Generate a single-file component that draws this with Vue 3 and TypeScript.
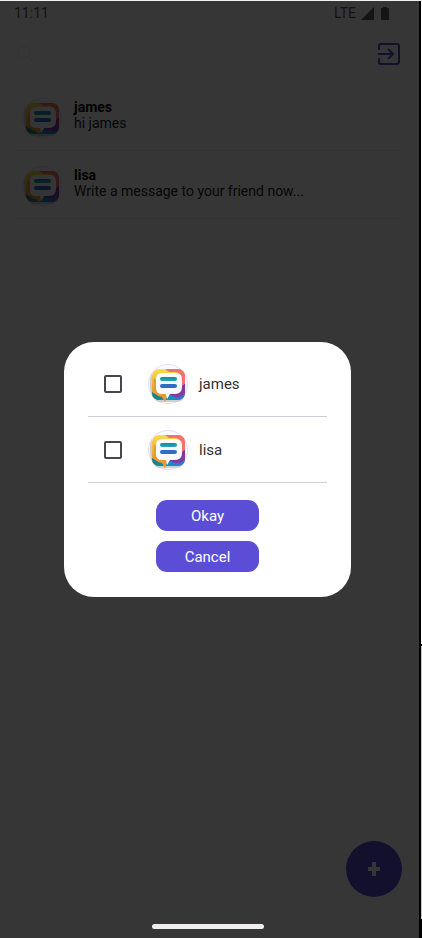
<script setup lang="ts">
import { ref } from 'vue'

interface Chat {
  name: string
  message: string
}

const chats: Chat[] = [
  { name: 'james', message: 'hi james' },
  { name: 'lisa', message: 'Write a message to your friend now...' },
]

const selected = ref<string[]>([])
</script>

<template>
  <div class="page">
    <svg class="sprite" width="0" height="0" aria-hidden="true">
      <defs>
        <linearGradient id="gold" x1="0" y1="0" x2="0" y2="1">
          <stop offset="0" stop-color="#fbdc4c" />
          <stop offset="0.5" stop-color="#eeb038" />
          <stop offset="1" stop-color="#e58a2c" />
        </linearGradient>
        <linearGradient id="violet" x1="0" y1="0" x2="1" y2="1">
          <stop offset="0" stop-color="#6b2a92" />
          <stop offset="1" stop-color="#8d3fa6" />
        </linearGradient>
        <linearGradient id="sea" x1="0" y1="0" x2="1" y2="0">
          <stop offset="0" stop-color="#12807f" />
          <stop offset="0.45" stop-color="#1793b8" />
          <stop offset="1" stop-color="#2b6fe0" />
        </linearGradient>
        <linearGradient id="teal" x1="0" y1="0" x2="0" y2="1">
          <stop offset="0" stop-color="#168a94" />
          <stop offset="1" stop-color="#22a9bd" />
        </linearGradient>
        <clipPath id="tile">
          <rect x="4" y="5" width="33" height="31" rx="7" />
        </clipPath>
      </defs>
      <symbol id="logo" viewBox="0 0 40 40">
        <circle cx="20" cy="20" r="19.5" fill="#fbfaff" stroke="#e6dcfa" />
        <path d="M4 9Q1 14 2 24Q3 35 10 38H30Q35 37 36 33L6 30Z" fill="#d0cfcf" />
        <g clip-path="url(#tile)">
          <rect x="4" y="5" width="33" height="31" fill="url(#gold)" />
          <path d="M17 5H38V25H33V14Q33 8 27 8H21Z" fill="#f0736d" />
          <path d="M4 28Q9 32 16 32L24 30L38 24V36H4Z" fill="url(#sea)" />
          <path d="M38 19V28Q33 35 25 32L20 30H28Q32 29 34 22Z" fill="url(#violet)" />
        </g>
        <path d="M6 14V26Q7 32 14 33L17 38L20 30Z" fill="#e69b30" />
        <path d="M14 9H27Q34 9 34 15V23Q34 30 27 30H22L19 35L18 30H14Q8 30 8 24V15Q8 9 14 9Z" fill="#fafafa" />
        <rect x="12" y="13" width="17" height="4" rx="2" fill="url(#teal)" />
        <rect x="12" y="20" width="17" height="4" rx="2" fill="#2c6fc4" />
      </symbol>
    </svg>

    <main class="screen">
      <header class="status">
        <span>11:11</span>
        <span class="signals">
          LTE
          <svg width="13" height="13" viewBox="0 0 13 13"><path d="M13 0V13H0Z" fill="currentColor" /></svg>
          <svg class="battery" width="8" height="13" viewBox="0 0 8 13">
            <path d="M2 0H6V1H7Q8 1 8 2V12Q8 13 7 13H1Q0 13 0 12V2Q0 1 1 1H2Z" fill="currentColor" />
          </svg>
        </span>
      </header>

      <nav class="toolbar">
        <button class="icon search" type="button" aria-label="Search">
          <svg width="18" height="18" viewBox="0 0 18 18" fill="none" stroke="currentColor" stroke-width="1.5">
            <circle cx="7" cy="7" r="6" />
            <path d="M11 11L17 17" />
          </svg>
        </button>
        <button class="icon exit" type="button" aria-label="Log out">
          <svg width="22" height="22" viewBox="0 0 22 22" fill="none" stroke="currentColor" stroke-width="2">
            <path d="M1 7V3Q1 1 3 1H19Q21 1 21 3V19Q21 21 19 21H3Q1 21 1 19V15" />
            <path d="M0 11H15M10 6L15 11L10 16" />
          </svg>
        </button>
      </nav>

      <ul class="chats">
        <li v-for="chat in chats" :key="chat.name" class="chat">
          <svg class="avatar"><use href="#logo" /></svg>
          <div class="lines">
            <strong>{{ chat.name }}</strong>
            <span>{{ chat.message }}</span>
          </div>
        </li>
      </ul>

      <button class="fab" type="button" aria-label="New chat">
        <svg width="12" height="14" viewBox="0 0 12 14"><path d="M4 0H8V5H12V9H8V14H4V9H0V5H4Z" fill="currentColor" /></svg>
      </button>

      <div class="scrim">
        <form class="dialog" role="dialog" aria-label="Choose friends" @submit.prevent>
          <label v-for="chat in chats" :key="chat.name" class="friend">
            <input v-model="selected" type="checkbox" :value="chat.name" />
            <svg class="avatar"><use href="#logo" /></svg>
            <span>{{ chat.name }}</span>
          </label>
          <div class="actions">
            <button type="submit">Okay</button>
            <button type="button">Cancel</button>
          </div>
        </form>
      </div>
      <div class="gesture"></div>
    </main>
    <div class="bezel"></div>
    <div class="edge"></div>
  </div>
</template>

<style>
body {
  margin: 0;
  background: #fff;
}
</style>

<style scoped>
.page {
  display: grid;
  grid-template-columns: 1fr 2px 1px;
  min-height: 100vh;
  box-sizing: border-box;
  border-top: 1px solid #eef3f2;
  font-family: Roboto, "Liberation Sans", sans-serif;
  font-size: 14px;
  line-height: 16px;
  color: #000;
}
.sprite {
  position: absolute;
}
.screen {
  position: relative;
  background: #fff;
}
.bezel {
  background: #000;
}
.edge {
  background: linear-gradient(#fff 68.6%, #000 68.6%, #000 68.8%, #c8c8c8 68.8%, #c8c8c8 98%, #000 98%);
}
button {
  border: 0;
  padding: 0;
  font: inherit;
  cursor: pointer;
}
.status {
  display: flex;
  justify-content: space-between;
  padding: 4px 30px 4px 14px;
  color: #606060;
}
.signals {
  display: flex;
  align-items: center;
  gap: 5px;
}
.battery {
  margin-left: 2px;
}
.toolbar {
  display: flex;
  align-items: center;
  justify-content: space-between;
  padding: 18px 19px 0 17px;
}
.icon {
  display: flex;
  background: none;
}
.search {
  color: #f0f0f0;
}
.exit {
  color: #5b4dd6;
}
.chats {
  list-style: none;
  margin: 18px 17px 0 14px;
  padding: 0;
}
.chat {
  display: flex;
  align-items: center;
  gap: 12px;
  box-sizing: border-box;
  height: 68px;
  padding: 2px 0 0 8px;
  border-bottom: 1px solid #ebebee;
}
.avatar {
  flex: none;
  width: 40px;
  height: 40px;
}
.lines {
  display: flex;
  flex-direction: column;
  margin-bottom: 6px;
}
.lines span {
  color: #222;
}
.fab {
  position: absolute;
  right: 17px;
  bottom: 41px;
  display: grid;
  place-items: center;
  width: 56px;
  height: 56px;
  border-radius: 50%;
  background: #5b4dd6;
  color: #fff;
}
.scrim {
  position: absolute;
  inset: 0;
  display: grid;
  align-items: center;
  padding: 0 68px 0 64px;
  background: rgba(0, 0, 0, 0.79);
}
.dialog {
  padding: 9px 24px 25px;
  border-radius: 30px;
  background: #fff;
}
.friend {
  display: flex;
  align-items: center;
  box-sizing: border-box;
  height: 66px;
  padding-left: 16px;
  border-bottom: 1px solid #cfcdd8;
  font-size: 15px;
  color: #333;
}
.friend input {
  appearance: none;
  width: 18px;
  height: 18px;
  margin: 0 26px 0 0;
  border: 2px solid #49454f;
  border-radius: 2px;
}
.friend input:checked {
  background: #5b4dd6;
}
.friend span {
  margin-left: 11px;
}
.actions {
  display: flex;
  flex-direction: column;
  align-items: center;
  gap: 10px;
  margin-top: 17px;
}
.actions button {
  width: 103px;
  height: 31px;
  border-radius: 11px;
  background: #5b4dd6;
  color: #fff;
  font-size: 15px;
}
.gesture {
  position: absolute;
  bottom: 9px;
  left: 50%;
  width: 112px;
  height: 5px;
  margin-left: -58px;
  border-radius: 3px;
  background: #f0eeee;
}
</style>
